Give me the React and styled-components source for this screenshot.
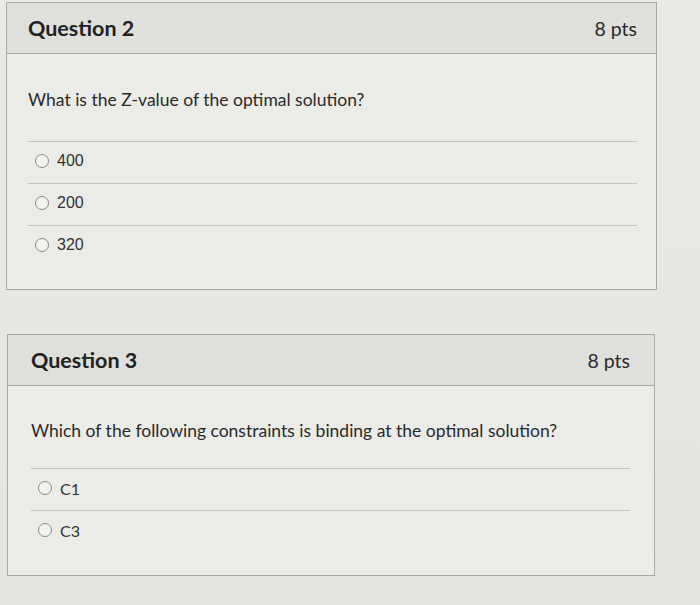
import React from 'react';
import styled, { createGlobalStyle } from 'styled-components';

const GlobalStyle = createGlobalStyle`
  html, body {
    margin: 0;
    padding: 0;
    background: #e7e7e4;
    font-family: Lato, "Liberation Sans", sans-serif;
    color: #2b2b2b;
  }
`;

const questions = [
  {
    id: 2,
    points: '8 pts',
    text: 'What is the Z-value of the optimal solution?',
    answers: ['400', '200', '320'],
    answerFont: '"Liberation Sans", Arial, sans-serif',
    card: { top: 2, left: 6, width: 651, pad: 21, right: 19 },
    body: { top: 35, gap: 30, bottom: 22 },
  },
  {
    id: 3,
    points: '8 pts',
    text: 'Which of the following constraints is binding at the optimal solution?',
    answers: ['C1', 'C3'],
    answerFont: 'Lato, sans-serif',
    card: { top: 44, left: 7, width: 648, pad: 23, right: 24 },
    body: { top: 34, gap: 26, bottom: 23 },
  },
];

const Page = styled.div`
  display: flex;
  flex-direction: column;
  width: 700px;
  height: 605px;
  overflow: hidden;
  background: linear-gradient(180deg, #e9e9e6 0%, #e6e6e3 60%, #e3e3df 100%);
`;

const Card = styled.section`
  margin-top: ${(p) => p.$top}px;
  margin-left: ${(p) => p.$left}px;
  width: ${(p) => p.$width}px;
  border: 1px solid #a9a9a6;
  background: #ebebe8;
  box-sizing: border-box;
`;

const Header = styled.header`
  display: flex;
  align-items: center;
  justify-content: space-between;
  height: 50px;
  padding: 0 ${(p) => p.$right}px 0 ${(p) => p.$pad}px;
  background: #dfdfdc;
  border-bottom: 1px solid #a9a9a6;
`;

const Title = styled.h2`
  margin: 0;
  font-family: Lato, sans-serif;
  font-weight: 700;
  font-size: 21.5px;
  color: #222;
`;

const Points = styled.span`
  font-family: Lato, sans-serif;
  font-size: 19.5px;
  font-weight: 400;
  color: #2a2a2a;
`;

const Body = styled.div`
  padding: ${(p) => p.$top}px ${(p) => p.$right}px ${(p) => p.$bottom}px
    ${(p) => p.$pad}px;
`;

const QuestionText = styled.p`
  margin: 0 0 ${(p) => p.$gap}px;
  font-family: Lato, sans-serif;
  font-size: 17.5px;
  line-height: 22px;
  color: #2a2a2a;
`;

const AnswerList = styled.ul`
  list-style: none;
  margin: 0;
  padding: 0;
`;

const Answer = styled.li`
  display: flex;
  align-items: center;
  gap: 8px;
  height: 42px;
  box-sizing: border-box;
  padding: 0 0 3px 7px;
  border-top: 1px solid #c4c4c1;
  font-family: ${(p) => p.$font};
  font-size: 16px;
  color: #333;
`;

const Radio = styled.span`
  width: 12px;
  height: 12px;
  border-radius: 50%;
  border: 1px solid #8a8a88;
  background: #f2f2f0;
  flex-shrink: 0;
`;

const Question = ({ q }) => (
  <Card $top={q.card.top} $left={q.card.left} $width={q.card.width}>
    <Header $pad={q.card.pad} $right={q.card.right}>
      <Title>Question {q.id}</Title>
      <Points>{q.points}</Points>
    </Header>
    <Body
      $pad={q.card.pad}
      $right={q.card.right}
      $top={q.body.top}
      $bottom={q.body.bottom}
    >
      <QuestionText $gap={q.body.gap}>{q.text}</QuestionText>
      <AnswerList>
        {q.answers.map((a) => (
          <Answer key={a} $font={q.answerFont}>
            <Radio />
            {a}
          </Answer>
        ))}
      </AnswerList>
    </Body>
  </Card>
);

export default function App() {
  return (
    <>
      <GlobalStyle />
      <Page>
        {questions.map((q) => (
          <Question key={q.id} q={q} />
        ))}
      </Page>
    </>
  );
}
